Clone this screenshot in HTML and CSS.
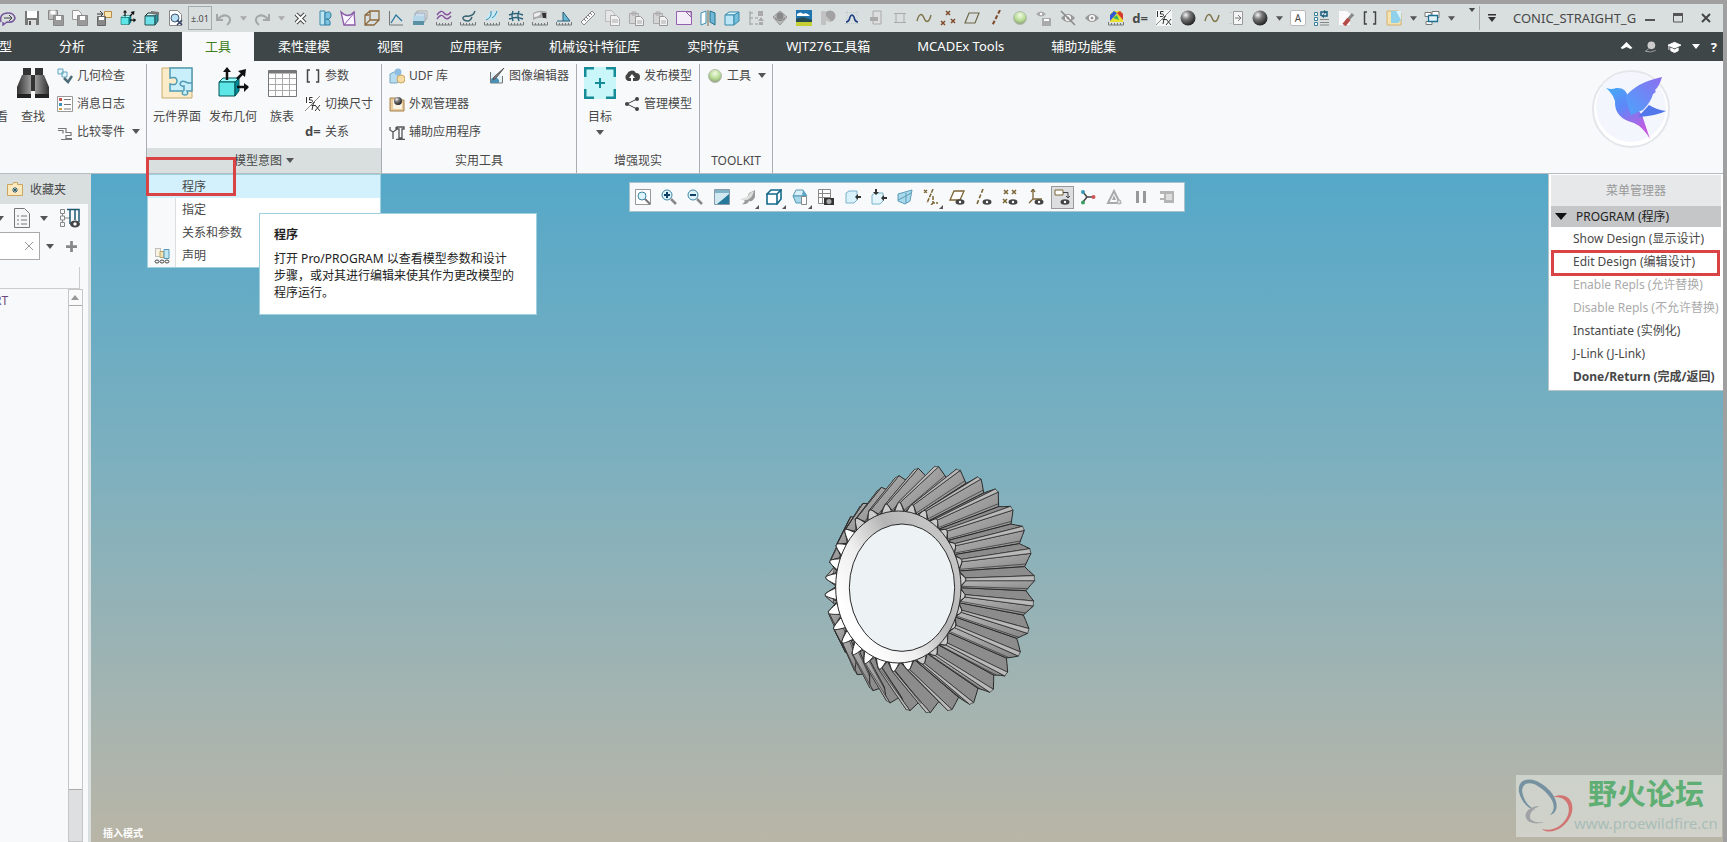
FILE: index.html
```
<!DOCTYPE html>
<html lang="zh-CN">
<head>
    <meta charset="UTF-8">
    <meta name="viewport" content="width=device-width, initial-scale=1.0">
    <title>CONIC_STRAIGHT_GEAR</title>
    <link rel="stylesheet" href="styles.css">
</head>
<body>

    <!-- SHARED ICONS -->
    <svg class="defs" width="0" height="0" aria-hidden="true">
        <defs>
            <radialGradient id="dark-ball" cx="0.35" cy="0.3" r="0.75"><stop offset="0" stop-color="#f4f4f4"/><stop offset="0.4" stop-color="#777"/><stop offset="1" stop-color="#1c1c1c"/></radialGradient>
            <radialGradient id="green-ball" cx="0.5" cy="0.3" r="0.7"><stop offset="0" stop-color="#f2fae6"/><stop offset="0.6" stop-color="#b4da90"/><stop offset="1" stop-color="#8a9a80"/></radialGradient>
            <linearGradient id="steel" x1="0" x2="1"><stop offset="0" stop-color="#333"/><stop offset="0.5" stop-color="#aaa"/><stop offset="1" stop-color="#333"/></linearGradient>
            <linearGradient id="bird" x1="0" y1="0" x2="0.6" y2="1"><stop offset="0" stop-color="#3fb4f5"/><stop offset="0.5" stop-color="#5e87f8"/><stop offset="1" stop-color="#c45be0"/></linearGradient>
            <linearGradient id="wing" x1="0" y1="1" x2="1" y2="0"><stop offset="0" stop-color="#4aa5fb"/><stop offset="1" stop-color="#8d6ef0"/></linearGradient>
            <linearGradient id="ring" x1="0.1" y1="0.7" x2="0.8" y2="0.2"><stop offset="0" stop-color="#fff"/><stop offset="0.35" stop-color="#eee"/><stop offset="0.7" stop-color="#b4b4b4"/><stop offset="1" stop-color="#c4c4c4"/></linearGradient>
            <linearGradient id="flank" x1="0" y1="0" x2="1" y2="1"><stop offset="0" stop-color="#b6b6b6"/><stop offset="1" stop-color="#868686"/></linearGradient>
        </defs>
        <symbol id="i-ball" viewBox="0 0 16 16"><circle cx="8" cy="8" r="7.5" fill="url(#dark-ball)"/></symbol>
        <symbol id="i-green" viewBox="0 0 16 16"><circle cx="8" cy="8" r="6.5" fill="url(#green-ball)" stroke="#b4bdae"/></symbol>
        <symbol id="i-wave" viewBox="0 0 16 16"><path d="M1 11C3 3 6 3 8 8s5 5 7-3" fill="none" stroke="#7d7348" stroke-width="1.4"/></symbol>
        <symbol id="i-ruler" viewBox="0 0 16 16"><path d="M.5 12v3h15v-3M3.500 15v-2M6.500 15v-2M9.500 15v-2M12.500 15v-2" fill="none" stroke="#777"/></symbol>
        <symbol id="i-eye" viewBox="0 0 16 16"><path d="M1 8q7-8 14 0q-7 8-14 0z" fill="currentColor"/><circle cx="8" cy="8" r="3" fill="#fff"/><circle cx="8" cy="8" r="1.500" fill="currentColor"/></symbol>
        <symbol id="i-paste" viewBox="0 0 16 16"><path d="M1.500 3.500h9v10h-9zM4 2h4v3H4z" fill="#d5d5d5" stroke="#aaa"/><path d="M7.500 6.500h5l3 3v6h-8z" fill="#f2f2f2" stroke="#999"/><path d="M9 11h5M9 13h5" stroke="#aaa"/></symbol>
        <symbol id="i-fx" viewBox="0 0 16 16"><path d="M0 0h16v16H0z" fill="#fff" opacity="0.700"/><path d="M15 0L0 15" stroke="#888"/><path d="M1.500 1v6M7.500 1.500h-3V4h2q1 0 1 1.500T4 6.500M10 6q-2 0-2 3l-1 5M6.500 9.500H10M10 9l5 6M15 9l-5 6" fill="none" stroke="#333"/></symbol>
        <symbol id="i-publish" viewBox="0 0 32 32"><path d="M2 15l4-4h16l-4 4z" fill="#9ff" stroke="#055"/><path d="M2 15h16v14H2z" fill="#5ee6e6" stroke="#055"/><path d="M18 15l4-4v13l-4 5z" fill="#089" stroke="#055"/><path d="M10 13V3M20 12l7-7M20 20h11" stroke="#111" stroke-width="2.500"/><path d="M6 5l4-5 4 5zM21 4l8-2-1 8zM27 16l5 4-5 5z" fill="#111"/></symbol>
        <symbol id="i-caret" viewBox="0 0 8 5"><path d="M0 0h8L4 5z" fill="currentColor"/></symbol>
    </svg>

    <!-- QUICK ACCESS BAR -->
    <header class="quick-bar">
        <div class="quick-tools">
            <button aria-label="会话"><svg viewBox="0 0 16 16"><path d="M1 12q-2-9 7-9 6 0 7 5-1 5-8 4l-4 3v-3" fill="none" stroke="#75579c" stroke-width="1.500"/><path d="M4 8h8m-3-3l3 3-3 3" fill="none" stroke="#444"/></svg></button>
            <button aria-label="保存"><svg viewBox="0 0 16 16"><path d="M1 1h14v14H1z" fill="#777"/><path d="M3 1h10v7H3z" fill="#fff"/><path d="M4 10h8v5H4z" fill="#ddd"/><path d="M5 11h2v4H5z" fill="#555"/></svg></button>
            <button aria-label="保存副本"><svg viewBox="0 0 16 16"><path d="M.5.5h9v9h-9z" fill="#bbb" stroke="#888"/><path d="M2.500.5h5v4h-5z" fill="#fff"/><path d="M5.500 5.500h10v10h-10z" fill="#999" stroke="#888"/><path d="M8 6h5v4H8z" fill="#fff"/></svg></button>
            <button aria-label="另存"><svg viewBox="0 0 16 16"><path d="M.5.5h6l3 3v6h-9z" fill="#fafafa" stroke="#999"/><path d="M5.500 5.500h10v10h-10z" fill="#999" stroke="#888"/><path d="M8 6h5v4H8z" fill="#fff"/></svg></button>
            <button aria-label="保存备份"><svg viewBox="0 0 16 16"><path d="M8.500 1.500h7v6h-7z" fill="#fbe6b0" stroke="#b98d48"/><path d="M1 4h6M4 1l3 3-3 3" fill="none" stroke="#333"/><path d="M1.500 6.500h8v9h-8z" fill="#888" stroke="#666"/><path d="M3 7h5v3H3z" fill="#fff"/></svg></button>
            <button aria-label="发布几何"><svg><use href="#i-publish"/></svg></button>
            <button aria-label="收缩包络"><svg viewBox="0 0 16 16"><path d="M1 6l3-3h10l-3 3z" fill="#cff" stroke="#222"/><path d="M1 6h10v9H1z" fill="#6ee0ea" stroke="#255"/><path d="M11 6l3-3v8l-3 4z" fill="#2a98a5" stroke="#255"/><path d="M7 1l8 1v3l-8-1z" fill="#777"/></svg></button>
            <button aria-label="查看文件"><svg viewBox="0 0 16 16"><path d="M1.500.5h8l4 4v11h-12z" fill="#fff" stroke="#888"/><circle cx="7" cy="8" r="4" fill="#b9e0f3" stroke="#457"/><path d="M9 10l5 5M14 10l-5 5" stroke="#346" stroke-width="1.500"/></svg></button>
            <button class="boxed" aria-label="公差">±.01</button>
            <button aria-label="撤销"><svg viewBox="0 0 16 16"><path d="M1 4v6h6M2 9q6-6 11-2 3 4-2 8" fill="none" stroke="#a3a7a8" stroke-width="2"/></svg></button>
            <button class="arrow" aria-label="撤销列表"><svg class="off"><use href="#i-caret"/></svg></button>
            <button aria-label="重做"><svg viewBox="0 0 16 16"><path d="M15 4v6H9M14 9q-6-6-11-2-3 4 2 8" fill="none" stroke="#a3a7a8" stroke-width="2"/></svg></button>
            <button class="arrow" aria-label="重做列表"><svg class="off"><use href="#i-caret"/></svg></button>
            <button aria-label="关闭文件"><svg viewBox="0 0 16 16"><path d="M4 4l9 9M13 4l-9 9" stroke="#444" stroke-width="4"/><path d="M4 4l9 9M13 4l-9 9" stroke="#fff" stroke-width="2"/></svg></button>
            <button aria-label="旋转特征"><svg viewBox="0 0 16 16"><path d="M4 1h5v14H4z" fill="#bfe5f3" stroke="#3689ac"/><path d="M9 3q6-3 6 2t-5 4q5 0 4 6H9z" fill="#7cc4e0" stroke="#2e7da0"/></svg></button>
            <button aria-label="曲面"><svg viewBox="0 0 16 16"><path d="M1 2q7 7 13 0l1 13H4z" fill="#faf5ff" stroke="#8a5aa8" stroke-width="1.300"/><path d="M4 15L15 2" stroke="#8a5aa8"/></svg></button>
            <button aria-label="边界"><svg viewBox="0 0 16 16"><path d="M6 1h9v9H6zM6 1L1 5v10h9l5-5M1 15l5-5M1 5h4" fill="none" stroke="#8c6a3d" stroke-width="1.300"/></svg></button>
            <button aria-label="坐标"><svg viewBox="0 0 16 16"><path d="M1.500 1v14H15" fill="none" stroke="#777"/><path d="M3 13l5-8 6 6" fill="none" stroke="#28789c" stroke-width="1.300"/></svg></button>
            <button aria-label="图像"><svg viewBox="0 0 16 16"><path d="M5 1h10v8H5z" fill="#e5e5e5" stroke="#aaa"/><path d="M3 3h10v9H3z" fill="#cde" stroke="#9ab"/><path d="M1 6h11v9H1z" fill="#b5d7e8"/><path d="M1 11h11v4H1z" fill="#5c91a5"/></svg></button>
            <button aria-label="曲率分析"><svg viewBox="0 0 16 16"><path d="M1 5q4-6 7-2t7-1M1 9q4-6 7-2t7-1" fill="none" stroke="#85539d" stroke-width="1.400"/><use href="#i-ruler"/></svg></button>
            <button aria-label="偏移分析"><svg viewBox="0 0 16 16"><path d="M15 1q-2 6-9 5-5 1-2 4 6 3 8-3" fill="none" stroke="#3c6672" stroke-width="1.500"/><use href="#i-ruler"/></svg></button>
            <button aria-label="着色分析"><svg viewBox="0 0 16 16"><path d="M1 9L6 2l9-1-4 9z" fill="#c6e9f5"/><path d="M2 10Q8 8 7 1M8 8q4-2 5-7" fill="none" stroke="#3289a9"/><use href="#i-ruler"/></svg></button>
            <button aria-label="网格曲面"><svg viewBox="0 0 16 16"><path d="M1 5q7-3 14 0M1 9q7-3 14 0M5 1q-2 5 0 10M11 1q-2 5 0 10" fill="none" stroke="#28607a" stroke-width="1.400"/><use href="#i-ruler"/></svg></button>
            <button aria-label="反射分析"><svg viewBox="0 0 16 16"><path d="M1 3q7-4 14-1v7q-7-3-14 1z" fill="#aaa"/><path d="M2 4q5-3 7-1-2 4-7 4z" fill="#eee"/><path d="M10 3h4v5h-3z" fill="#333"/><use href="#i-ruler"/></svg></button>
            <button aria-label="拔模分析"><svg viewBox="0 0 16 16"><path d="M7 2v9h7z" fill="#6db8d4" stroke="#28607a"/><path d="M1 11h6" stroke="#28607a"/><use href="#i-ruler"/></svg></button>
            <button aria-label="测量"><svg viewBox="0 0 16 16"><path d="M1 12L12 1l3 3L4 15z" fill="#fafafa" stroke="#888"/><path d="M4 9l2 2M6 7l2 2M8 5l2 2M10 3l2 2" stroke="#777"/></svg></button>
            <button aria-label="复制"><svg viewBox="0 0 16 16"><path d="M1.500.5h6l3 3v8h-9z" fill="#e5e5e5" stroke="#bbb"/><path d="M6.500 5.500h6l3 3v7h-9z" fill="#f1f1f1" stroke="#aaa"/><path d="M8 10h6M8 12h6" stroke="#aaa"/></svg></button>
            <button aria-label="粘贴"><svg><use href="#i-paste"/></svg></button>
            <button aria-label="选择性粘贴"><svg><use href="#i-paste"/></svg></button>
            <button aria-label="草绘"><svg viewBox="0 0 16 16"><path d="M.5 1.500h15v13H.5z" fill="#f3edf7" stroke="#9461ad"/><path d="M10 2l5 5V2z" fill="#fff" stroke="#9461ad"/></svg></button>
            <button aria-label="对称"><svg viewBox="0 0 16 16"><path d="M1 3l5-2v12l-5 2z" fill="#fff" stroke="#3a91b4"/><path d="M10 1l5 2v12l-5-3z" fill="#6fb9d6" stroke="#23708f"/><path d="M8 0v16" stroke="#7a6a4a"/></svg></button>
            <button aria-label="拉伸"><svg viewBox="0 0 16 16"><path d="M1 5l4-3h10l-4 3z" fill="#e0f6fd" stroke="#3689ac"/><path d="M1 5h9v10H1z" fill="#bce6f5" stroke="#3689ac"/><path d="M10 5l5-3v9l-5 4z" fill="#75bfdc" stroke="#3689ac"/></svg></button>
            <button aria-label="模型树"><svg viewBox="0 0 16 16"><path d="M2 1v14M2 3h3M2 8h3M2 14h3M7 8h3M7 14h3" stroke="#999"/><path d="M10 1h5v5h-5zM13 7l3 4h-6zM11 12h4v3h-4z" fill="#aaa"/></svg></button>
            <button aria-label="阵列"><svg viewBox="0 0 16 16"><path d="M8 1l7 6-7 8-7-8z" fill="#bbb" stroke="#999"/><circle cx="8" cy="6" r="3.500" fill="#888"/><path d="M3 8q5 5 10 0" fill="none" stroke="#777"/></svg></button>
            <button aria-label="场景"><svg viewBox="0 0 16 16"><path d="M0 0h16v16H0z" fill="#1f75ad"/><path d="M1 4q4-3 6 0 4-2 7 2H1z" fill="#fff"/><path d="M0 9l7-2 9 3v2H0z" fill="#244b52"/><path d="M0 12h16v4H0z" fill="#c5ce35"/></svg></button>
            <button aria-label="渲染"><svg viewBox="0 0 16 16"><circle cx="10" cy="6" r="5.500" fill="#a2a2a2"/><path d="M1 1h5v5l5 5-2 1-3-2v5H1z" fill="#c2c2c2"/></svg></button>
            <button aria-label="曲线"><svg viewBox="0 0 16 16"><path d="M1 2.500h14M1 13.500h14M3 1v14M13 1v14" stroke="#bcc9cf" stroke-dasharray="1 1"/><path d="M2 12q3 0 4-5 2-4 4 0 1 5 4 5" fill="none" stroke="#1d3e80" stroke-width="1.600"/></svg></button>
            <button aria-label="移动"><svg viewBox="0 0 16 16"><path d="M5 1h8v13H5z" fill="#ddd" stroke="#aaa"/><path d="M2 7h8v4H2z" fill="#aaa"/></svg></button>
            <button aria-label="矩形"><svg viewBox="0 0 16 16"><path d="M4 3.500h8v9H4zM2 3.500h2M12 3.500h2M2 12.500h2M12 12.500h2" fill="none" stroke="#aaa"/></svg></button>
            <button aria-label="样条"><svg><use href="#i-wave"/></svg></button>
            <button aria-label="基准点"><svg viewBox="0 0 16 16"><path d="M6 1l4 4m0-4L6 5M1 11l4 4m0-4l-4 4M11 9l4 4m0-4l-4 4" stroke="#7e4b2b" stroke-width="1.500"/></svg></button>
            <button aria-label="基准平面"><svg viewBox="0 0 16 16"><path d="M5 3h10l-4 10H1z" fill="none" stroke="#6d6848" stroke-width="1.200"/></svg></button>
            <button aria-label="基准轴"><svg viewBox="0 0 16 16"><path d="M12 0L4 16" stroke="#7e4b2b" stroke-width="2" stroke-dasharray="4 2"/></svg></button>
            <button aria-label="运行"><svg><use href="#i-green"/></svg></button>
            <button aria-label="保存可见性"><svg viewBox="0 0 16 16"><path d="M0 4q5-5 10 0-5 5-10 0zM6 8h9v8H6z" fill="#aaa"/><path d="M8 9h5v2H8zM4 3h2v2H4z" fill="#fff"/></svg></button>
            <button class="gray" aria-label="隐藏"><svg><use href="#i-eye"/><path d="M1 1l14 14" stroke="#888" stroke-width="1.500"/></svg></button>
            <button class="gray" aria-label="显示"><svg><use href="#i-eye"/></svg></button>
            <button aria-label="色谱"><svg viewBox="0 0 16 16"><path d="M2 12V4l4-3h6l3 3v8z" fill="#e9df32"/><path d="M2 11V5l4-4 3 2z" fill="#3057d7"/><path d="M9 3l3-2 3 3v6z" fill="#d63a32"/><path d="M5 8l4-3 2 5z" fill="#35b960"/><use href="#i-ruler"/></svg></button>
            <button class="glyph" aria-label="关系">d=</button>
            <button aria-label="切换尺寸"><svg><use href="#i-fx"/></svg></button>
            <button aria-label="外观"><svg><use href="#i-ball"/></svg></button>
            <button aria-label="曲线外观"><svg><use href="#i-wave"/></svg></button>
            <button aria-label="导出"><svg viewBox="0 0 16 16"><path d="M5.500 1.500h9v13h-9z" fill="#f5f5f5" stroke="#999"/><path d="M1 2.500h3M1 13.500h3" stroke="#ccc"/><path d="M7 8h5M10 5l3 3-3 3" fill="none" stroke="#777"/></svg></button>
            <button aria-label="外观库"><svg><use href="#i-ball"/></svg></button>
            <button class="arrow" aria-label="外观列表"><svg><use href="#i-caret"/></svg></button>
            <button class="glyph letter" aria-label="注解">A</button>
            <button aria-label="再生"><svg viewBox="0 0 16 16"><path d="M.5 2.500h3v3h-3zM.5 7.500h3v3h-3zM.5 12.500h3v3h-3z" fill="#fff" stroke="#37809c"/><path d="M6 9.500h9M6 12.500h9M6 15h9" stroke="#888"/><path d="M7 6V2h3M13 1v5h-3" fill="none" stroke="#175e7c" stroke-width="1.500"/><path d="M10 0l3 2-3 2zM10 4v4L7 6z" fill="#175e7c"/></svg></button>
            <button aria-label="擦除"><svg viewBox="0 0 16 16"><path d="M1 1h8l3 3v11H1z" fill="#fafafa"/><path d="M8 12l7-8" stroke="#888" stroke-width="3"/><path d="M6 15l5-6" stroke="#b54c45" stroke-width="4"/></svg></button>
            <button aria-label="参数"><svg viewBox="0 0 16 16"><path d="M5 2H2.500v12H5M11 2h2.500v12H11" fill="none" stroke="#444" stroke-width="1.500"/></svg></button>
            <button aria-label="打开"><svg viewBox="0 0 16 16"><path d="M1 1h11l3 2v12H1z" fill="#f6e2ab" stroke="#d2b273"/><path d="M5 1h10v9l-3 3H5z" fill="#8fd0ea"/><path d="M10 1h5v9z" fill="#d8f2fb"/></svg></button>
            <button class="arrow" aria-label="打开列表"><svg><use href="#i-caret"/></svg></button>
            <button aria-label="窗口"><svg viewBox="0 0 16 16"><path d="M8 1.500h7v6H8zM1 2.500h6v4H1zM2 11.500h6v3H2z" fill="#fff" stroke="#777"/><path d="M4.500 5.500h9v6h-9z" fill="#dff2fa" stroke="#1f6f93" stroke-width="1.300"/></svg></button>
            <button class="arrow" aria-label="窗口列表"><svg><use href="#i-caret"/></svg></button>
        </div>
        <button class="overflow" aria-label="更多命令"><svg><use href="#i-caret"/></svg></button>
        <button class="customize" aria-label="自定义"><svg viewBox="0 0 10 8"><path d="M1 0h8v1.500H1zM1 3h8L5 8z" fill="#333"/></svg></button>
        <span class="doc-title">CONIC_STRAIGHT_G</span>
        <div class="window-buttons">
            <button aria-label="最小化"><svg viewBox="0 0 10 10"><path d="M0 6h10v2H0z" fill="#555"/></svg></button>
            <button aria-label="最大化"><svg viewBox="0 0 10 10"><path d="M.5 1v8h9V1z" fill="none" stroke="#555"/><path d="M0 0h10v3H0z" fill="#555"/></svg></button>
            <button aria-label="关闭"><svg viewBox="0 0 10 10"><path d="M1 1l8 8M9 1L1 9" stroke="#444" stroke-width="2"/></svg></button>
        </div>
    </header>

    <!-- RIBBON TABS -->
    <nav class="tabs">
        <a href="#model">型</a>
        <a href="#analysis">分析</a>
        <a href="#annotate">注释</a>
        <a href="#tools" class="active">工具</a>
        <a href="#flexible">柔性建模</a>
        <a href="#view">视图</a>
        <a href="#apps">应用程序</a>
        <a href="#features">机械设计特征库</a>
        <a href="#simulation">实时仿真</a>
        <a href="#wjt">WJT276工具箱</a>
        <a href="#mcadex">MCADEx Tools</a>
        <a href="#aux">辅助功能集</a>
        <div class="tab-tools">
            <button aria-label="折叠功能区"><svg viewBox="0 0 12 12"><path d="M0 7l6-6 6 6-2 1-4-2-4 2z" fill="#fff"/></svg></button>
            <button aria-label="搜索"><svg viewBox="0 0 14 14"><circle cx="8" cy="5" r="4.500" fill="#ccc"/><path d="M5 9l-4 3q6 2 12-1" fill="none" stroke="#aaa"/></svg></button>
            <button aria-label="学习"><svg viewBox="0 0 14 12"><path d="M0 4l7-3 7 3-7 3zM3 7l4 2 4-2v3l-4 2-4-2zM1 4v5" fill="#fff" stroke="#fff"/></svg></button>
            <button aria-label="学习列表" class="small"><svg><use href="#i-caret"/></svg></button>
            <button aria-label="帮助">?</button>
        </div>
    </nav>

    <!-- RIBBON -->
    <section class="ribbon" id="tools">
        <div class="group investigate">
            <div class="tools">
                <button class="big cut">看</button>
                <button class="big"><svg viewBox="0 0 32 32"><path d="M6 1h8v8H6zM18 1h8v8h-8zM13 8h6v16h-6z" fill="#333"/><path d="M5 8h9v22H0V20zM18 8h9l5 12v10H18z" fill="url(#steel)"/><path d="M0 27h14v4H0zM18 27h14v4H18z" fill="#222"/></svg>查找</button>
                <div class="stack">
                    <button><svg viewBox="0 0 16 16"><path d="M1 1h5v5H1zM5 4h5v5H5z" fill="#e7f6fd" stroke="#61a4c2"/><path d="M7 10l4 4 4-6" fill="none" stroke="#4d6c7a" stroke-width="2.500"/></svg>几何检查</button>
                    <button><svg viewBox="0 0 16 16"><path d="M.5.5h15v15H.5z" fill="#fff" stroke="#999"/><path d="M2 2h3v3H2z" fill="#c75450"/><path d="M2 7h3v3H2z" fill="#3a93be"/><path d="M2 12h3v2H2z" fill="#d2a13d"/><path d="M7 3.500h7M7 8.500h7M7 13h7" stroke="#777"/></svg>消息日志</button>
                    <button><svg viewBox="0 0 16 16"><path d="M1 4.500h8v4h5v3H9v3h6M4 15.500h11M1 6.500h5v3" fill="none" stroke="#777" stroke-width="1.200"/></svg>比较零件<svg class="caret"><use href="#i-caret"/></svg></button>
                </div>
            </div>
        </div>
        <div class="group intent">
            <div class="tools">
                <button class="big"><svg viewBox="0 0 32 32"><path d="M1 1h30v30H1z" fill="#fbebc8" stroke="#c9aa6c"/><path d="M9 1h22v23h-5q2 4-2 4t-2-4H9v-7q7 2 7-3t-7-3z" fill="#c9effa" stroke="#4f9cb4" stroke-width="1.500"/><path d="M31 16h-4q-7-4-8 1 1 3 4 2v5" fill="none" stroke="#4f9cb4" stroke-width="1.500"/></svg>元件界面</button>
                <button class="big"><svg><use href="#i-publish"/></svg>发布几何</button>
                <button class="big narrow"><svg viewBox="0 0 32 32"><path d="M2.500 3.500h28v26h-28z" fill="#fff" stroke="#777"/><path d="M3 5h27" stroke="#777" stroke-width="3"/><path d="M3 11.500h27M3 17.500h27M3 23.500h27M9.500 6v23M16.500 6v23M23.500 6v23" stroke="#aaa"/></svg>族表</button>
                <div class="stack">
                    <button><svg viewBox="0 0 16 16"><path d="M5 2H2.500v12H5M11 2h2.500v12H11" fill="none" stroke="#444" stroke-width="1.500"/></svg>参数</button>
                    <button><svg><use href="#i-fx"/></svg>切换尺寸</button>
                    <button><b>d=</b>关系</button>
                </div>
            </div>
            <button class="group-title open">模型意图<svg class="caret"><use href="#i-caret"/></svg></button>

            <div class="menu" role="menu">
                <button role="menuitem" class="selected">程序</button>
                <button role="menuitem">指定</button>
                <button role="menuitem">关系和参数</button>
                <button role="menuitem"><svg viewBox="0 0 16 16"><path d="M1.500.5h5v8h-5z" fill="#f7f1df" stroke="#888" stroke-dasharray="1 1"/><path d="M6 3.500h4v6H6z" fill="#f3e3b4" stroke="#b9a467"/><path d="M10 1.500h5v9h-5z" fill="#bfe6f5" stroke="#5499b5"/><ellipse cx="3" cy="13.500" rx="2" ry="1.500" fill="none" stroke="#444"/><ellipse cx="8" cy="13.500" rx="2" ry="1.500" fill="none" stroke="#444"/><ellipse cx="13" cy="13.500" rx="2" ry="1.500" fill="none" stroke="#444"/></svg>声明</button>
            </div>
            <div class="callout"></div>
            <div class="tooltip" role="tooltip">
                <h2>程序</h2>
                <p>打开 Pro/PROGRAM 以查看模型参数和设计步骤，或对其进行编辑来使其作为更改模型的程序运行。</p>
            </div>
        </div>
        <div class="group utilities">
            <div class="tools">
                <div class="stack">
                    <button><svg viewBox="0 0 16 16"><path d="M1 6l4-2h6v8l-3 3H1z" fill="#b7dcef" stroke="#77a7c0"/><circle cx="9" cy="4" r="3.500" fill="#8fbde2"/><circle cx="12" cy="11" r="4" fill="#f5dda5" stroke="#c9a55f"/></svg>UDF 库</button>
                    <button><svg viewBox="0 0 16 16"><path d="M1 2h6l1 2h7v11H1z" fill="#e8ca9c" stroke="#a5824d"/><path d="M4 4h9v9H4z" fill="#f9f3e5"/><circle cx="9" cy="5" r="4" fill="url(#dark-ball)"/></svg>外观管理器</button>
                    <button><svg viewBox="0 0 16 16"><path d="M1 3v3l3 2v7M7 3v3L4 8M8 3h7v2h-2v9h-3V5H8zM7 15.500h9" fill="none" stroke="#555" stroke-width="1.300"/></svg>辅助应用程序</button>
                </div>
                <div class="stack">
                    <button><svg viewBox="0 0 16 16"><path d="M1.500 4v11h12V8" fill="#e4f2f8" stroke="#777"/><path d="M2 11l4-3 4 4v3H2z" fill="#4a91b5"/><path d="M15 0L7 10l-3 2 1-3z" fill="#888" stroke="#555"/></svg>图像编辑器</button>
                </div>
            </div>
            <div class="group-title">实用工具</div>
        </div>
        <div class="group ar">
            <div class="tools">
                <button class="big narrow"><svg viewBox="0 0 32 32"><path d="M0 0h32v32H0z" fill="#c9f7f9"/><path d="M1 10V1h9M22 1h9v9M31 22v9h-9M10 31H1v-9" fill="none" stroke="#168c98" stroke-width="3"/><path d="M16 11v10M11 16h10" stroke="#168c98" stroke-width="2"/></svg>目标<svg class="caret"><use href="#i-caret"/></svg></button>
                <div class="stack">
                    <button><svg viewBox="0 0 16 16"><path d="M4 13a4 4 0 0 1-1-7 5 5 0 0 1 9-1 4 4 0 0 1 0 8z" fill="#444"/><path d="M8 6l3 4H9v4H7v-4H5z" fill="#fff"/></svg>发布模型</button>
                    <button><svg viewBox="0 0 16 16"><path d="M13 3L3 8l10 5" fill="none" stroke="#444"/><circle cx="13" cy="3" r="2" fill="#444"/><circle cx="3" cy="8" r="2" fill="#444"/><circle cx="13" cy="13" r="2" fill="#444"/></svg>管理模型</button>
                </div>
            </div>
            <div class="group-title">增强现实</div>
        </div>
        <div class="group toolkit">
            <div class="tools">
                <div class="stack">
                    <button><svg><use href="#i-green"/></svg>工具<svg class="caret"><use href="#i-caret"/></svg></button>
                </div>
            </div>
            <div class="group-title">TOOLKIT</div>
        </div>
        <button class="bird" aria-label="助手"><svg viewBox="0 0 80 80"><circle cx="40" cy="40" r="38" fill="#fff" stroke="#e4e6ea" stroke-width="2"/><circle cx="40" cy="38" r="35" fill="#edf0fb" opacity="0.600"/><path d="M9 16q10 6 16 3 10-1 12 9l14 18 8 24Q52 58 43 54 23 49 24 32 20 20 9 16z" fill="url(#bird)"/><path d="M34 28Q46 13 71 8 68 18 64 21q2 2-2 4-2 8-10 16L40 46z" fill="url(#wing)"/><path d="M58 36q8 5 17 6-10 5-28 6z" fill="#5277ea"/></svg></button>
    </section>

    <!-- WORKSPACE -->
    <div class="workspace">
        <aside class="navigator">
            <div class="nav-tab"><svg viewBox="0 0 16 16"><path d="M.5 3.500h5l1-2h4v2h5v11H.5z" fill="#fbe9bd" stroke="#c9a55f"/><path d="M8 6v6M5 9h6M6 7l4 4M10 7l-4 4" stroke="#2c5d77"/></svg>收藏夹</div>
            <div class="nav-tools">
                <svg class="caret"><use href="#i-caret"/></svg>
                <button aria-label="显示设置"><svg viewBox="0 0 16 20"><path d="M.5.5h10l5 5v14H.5z" fill="#f4f7f8" stroke="#777"/><path d="M3 8h2M3 12h2M3 16h2M7 8h6M7 12h6M7 16h6" stroke="#777"/></svg></button>
                <svg class="caret"><use href="#i-caret"/></svg>
                <button class="tree" aria-label="树列"><svg viewBox="0 0 20 20"><path d="M.5 1.500h4v4h-4zM.5 8h4v4h-4zM.5 14.500h4v4h-4zM5 10h5M2.500 5v3M2.500 12v3" fill="none" stroke="#888"/><path d="M7 1.500h12V14M10 2v14M15 2v10" fill="none" stroke="#1d5870" stroke-width="1.500"/><ellipse cx="15" cy="16" rx="5" ry="3.500" fill="#444"/><circle cx="15" cy="16" r="1.700" fill="#fff"/></svg></button>
            </div>
            <div class="nav-filter">
                <input type="text" aria-label="筛选">
                <button class="clear" aria-label="清除"><svg viewBox="0 0 10 10"><path d="M1 1l8 8M9 1L1 9" stroke="#999"/></svg></button>
                <svg class="caret"><use href="#i-caret"/></svg>
                <button class="add" aria-label="添加"><svg viewBox="0 0 12 12"><path d="M6 0v12M0 6h12" stroke="#888" stroke-width="3"/></svg></button>
            </div>
            <div class="nav-header"></div>
            <div class="nav-tree">
                <span class="part">RT</span>
                <div class="scrollbar">
                    <button aria-label="向上滚动"><svg viewBox="0 0 8 5"><path d="M4 0l4 5H0z" fill="#999"/></svg></button>
                    <div class="thumb"></div>
                </div>
            </div>
        </aside>

        <main class="viewport">
            <div class="view-tools">
                <button aria-label="重新调整"><svg viewBox="0 0 16 16"><path d="M.5.5h15v15H.5z" fill="#fff" stroke="#999"/><circle cx="7" cy="7" r="4" fill="#dff3fb" stroke="#3c86a8"/><path d="M10 10l5 5" stroke="#777" stroke-width="2"/></svg></button>
                <button aria-label="放大"><svg viewBox="0 0 16 16"><circle cx="6" cy="6" r="5" fill="#dff3fb" stroke="#3c86a8"/><path d="M6 3v6M3 6h6" stroke="#123f66" stroke-width="2"/><path d="M10 10l5 5" stroke="#888" stroke-width="2.500"/></svg></button>
                <button aria-label="缩小"><svg viewBox="0 0 16 16"><circle cx="6" cy="6" r="5" fill="#dff3fb" stroke="#3c86a8"/><path d="M3 6h6" stroke="#123f66" stroke-width="2"/><path d="M10 10l5 5" stroke="#888" stroke-width="2.500"/></svg></button>
                <button aria-label="重画"><svg viewBox="0 0 16 16"><path d="M.5.5h15v15H.5z" fill="#d3e9f1" stroke="#89a"/><path d="M1 1h14v3H1z" fill="#7fb3c6"/><path d="M15 5v10H3l5-4z" fill="#26799b"/></svg></button>
                <button class="more" aria-label="渲染选项"><svg viewBox="0 0 16 16"><path d="M0 10q3 2 7-1l2-5 6-3v7q-2 5-6 4-2 4-7 3 4-2 2-4z" fill="#999"/><path d="M2 9q5 1 8-5l4-2q-1 5-5 8-3 2-7 1z" fill="#ddd"/></svg></button>
                <button class="more" aria-label="显示样式"><svg viewBox="0 0 16 16"><path d="M1 5l4-4h10l-4 4zM1 5h10v10H1zM11 5l4-4v9l-4 5z" fill="#fff" stroke="#16698c" stroke-width="1.600"/></svg></button>
                <button class="more" aria-label="已保存方向"><svg viewBox="0 0 16 16"><path d="M4 1h7l4 6H1z" fill="#d9f0f9" stroke="#5597b4"/><path d="M11 1l4 6h-5z" fill="#58a5c6"/><path d="M1 7h9v7H4z" fill="#a6d7eb" stroke="#5597b4"/><path d="M9.500 7.500h5v8h-5z" fill="#fff" stroke="#888"/></svg></button>
                <button aria-label="视图管理器"><svg viewBox="0 0 16 16"><path d="M.5.5h12v14H.5zM1 4.500h11M1 8.500h11M4.500 1v14" fill="#fff" stroke="#888"/><path d="M6 9h10v7H6z" fill="#333"/><circle cx="11" cy="12.500" r="2.500" fill="#aaa"/></svg></button>
                <button aria-label="移入"><svg viewBox="0 0 16 16"><path d="M1 4l3-2h8v9l-3 3H1z" fill="#d8f1fa" stroke="#79b3cb"/><path d="M12 8h4" stroke="#333" stroke-width="2"/><path d="M13 5v6l-3-3z" fill="#333"/></svg></button>
                <button aria-label="移出"><svg viewBox="0 0 16 16"><path d="M1 6l3-2h8v8l-3 3H1z" fill="#e4f5fb" stroke="#79b3cb"/><path d="M5 0v3M12 9h4" stroke="#333" stroke-width="2"/><path d="M2 3h6L5 6zM13 6v6l-3-3z" fill="#333"/></svg></button>
                <button aria-label="透视图"><svg viewBox="0 0 16 16"><path d="M1 5l14-4-2 11-5 3-7-3z" fill="#a8d8ec" stroke="#5c9cb8"/><path d="M9 4v10M1 11l8-4 5-3" fill="none" stroke="#5c9cb8"/></svg></button>
                <button class="more" aria-label="基准显示"><svg viewBox="0 0 16 16"><path d="M1 1l3 3m0-3L1 4M10 0L4 14M10 7v7h5M10 14l-2 2" fill="none" stroke="#7b6535" stroke-width="1.500" stroke-dasharray="4 1"/></svg></button>
                <button aria-label="平面显示"><svg viewBox="0 0 16 16"><path d="M5 2h10l-4 9H1z" fill="#fff" stroke="#7b6535" stroke-width="1.300"/><ellipse cx="11" cy="13" rx="4.500" ry="2.800" fill="#444"/><circle cx="11" cy="13" r="1.200" fill="#fff"/></svg></button>
                <button aria-label="轴显示"><svg viewBox="0 0 16 16"><path d="M7 0L1 15" stroke="#7b6535" stroke-width="1.600" stroke-dasharray="4 2"/><ellipse cx="11" cy="13" rx="4.500" ry="2.800" fill="#444"/><circle cx="11" cy="13" r="1.200" fill="#fff"/></svg></button>
                <button aria-label="点显示"><svg viewBox="0 0 16 16"><path d="M2 1l4 4m0-4L2 5M10 1l4 4m0-4l-4 4M1 10l4 4m0-4l-4 4" stroke="#7b6535" stroke-width="1.500"/><ellipse cx="11" cy="13" rx="4.500" ry="2.800" fill="#444"/><circle cx="11" cy="13" r="1.200" fill="#fff"/></svg></button>
                <button aria-label="坐标系显示"><svg viewBox="0 0 16 16"><path d="M5 1v9h9M5 10l-4 4M3 3l2-3 2 3" fill="none" stroke="#7b6535" stroke-width="1.300"/><ellipse cx="11" cy="13" rx="4.500" ry="2.800" fill="#444"/><circle cx="11" cy="13" r="1.200" fill="#fff"/></svg></button>
                <button class="pressed" aria-label="注释显示"><svg viewBox="0 0 16 16"><path d="M1 1h8v5H1z" fill="#fff" stroke="#7b6535"/><path d="M9 3.500h5V9M12 7l2 2 2-2" fill="none" stroke="#444"/><ellipse cx="11" cy="13" rx="4.500" ry="2.800" fill="#444"/><circle cx="11" cy="13" r="1.200" fill="#fff"/></svg></button>
                <button aria-label="旋转中心"><svg viewBox="0 0 16 16"><path d="M3 3l4 5h6M7 8l-4 5" fill="none" stroke="#444" stroke-width="1.500"/><circle cx="3" cy="3" r="2" fill="#3c9ab0"/><circle cx="13.500" cy="8" r="2" fill="#d05555"/><circle cx="3" cy="13.500" r="2" fill="#3a9e63"/></svg></button>
                <button aria-label="警告"><svg viewBox="0 0 16 16"><path d="M8 2l6 12H2z" fill="none" stroke="#aaa" stroke-width="2"/><path d="M8 6l2 5H6z" fill="#aaa"/><circle cx="13" cy="13" r="2" fill="#ddd" stroke="#aaa"/></svg></button>
                <button aria-label="暂停"><svg viewBox="0 0 16 16"><path d="M3 2h3v12H3zM10 2h3v12h-3z" fill="#999"/></svg></button>
                <button aria-label="停止"><svg viewBox="0 0 16 16"><path d="M1 2h14v12H5v-3H1V9h4V5H1z" fill="#b5b5b5"/><path d="M7 5h6v6H7z" fill="#ddd"/></svg></button>
            </div>

            <svg class="gear" id="gear" viewBox="0 0 720 840" role="img" aria-label="锥齿轮"></svg>

            <section class="menu-manager">
                <h2>菜单管理器</h2>
                <h3><svg viewBox="0 0 12 7"><path d="M0 0h12L6 7z" fill="#111"/></svg>PROGRAM (程序)</h3>
                <button>Show Design (显示设计)</button>
                <button class="marked">Edit Design (编辑设计)</button>
                <button disabled>Enable Repls (允许替换)</button>
                <button disabled>Disable Repls (不允许替换)</button>
                <button>Instantiate (实例化)</button>
                <button>J-Link (J-Link)</button>
                <button class="default">Done/Return (完成/返回)</button>
            </section>

            <p class="mode">插入模式</p>
            <div class="watermark">
                <svg viewBox="0 0 60 60"><g fill-rule="evenodd"><path d="M3 17C1 3 16 0 30 12 44 24 43 38 34 40 42 32 36 22 26 14 14 4 3 8 7 20c2 8 8 13 13 16C11 33 5 26 3 17z" fill="#7692a0"/><path d="M37 22c14-6 23 5 18 18C50 53 34 61 26 54c12 3 22-4 26-14 3-10-2-19-15-18z" fill="#d27472"/><path d="M24 31c-10 0-16 6-14 12 2 5 10 7 18 4-8 1-14-1-14-5 0-6 5-9 10-11z" fill="#a0a3a5"/></g></svg>
                <div>
                    <strong>野火论坛</strong>
                    <span>www.proewildfire.cn</span>
                </div>
            </div>
        </main>
    </div>

    <script src="gear.js"></script>
</body>
</html>
```

FILE: styles.css
```
:root {
    --bar: #d9dfdf;
    --dark: #3e4647;
    --ribbon: #f8f9fb;
    --text: #484848;
    --edge: #a0a0a0;
    --mark: #d94343;
    --font: "Noto Sans", "Noto Sans CJK SC", sans-serif;
}

* {
    box-sizing: border-box;
}

body {
    margin: 0;
    padding: 4px 4px 0 0;
    min-height: 100vh;
    display: flex;
    flex-direction: column;
    overflow: hidden;
    background: var(--edge);
    color: var(--text);
    font: 12px/17px var(--font);
}

button {
    margin: 0;
    padding: 0;
    border: 0;
    background: none;
    color: inherit;
    font: inherit;
    text-align: left;
    white-space: nowrap;
}

svg {
    display: block;
    flex: none;
    width: 16px;
    height: 16px;
}

.defs {
    position: absolute;
    width: 0;
    height: 0;
}

svg.caret {
    width: 8px;
    height: 5px;
    color: #555;
}

/* Quick access bar */
.quick-bar {
    display: flex;
    align-items: center;
    height: 28px;
    background: var(--bar);
}
.quick-tools {
    display: flex;
    align-items: center;
    flex: none;
    margin-left: -4px;
}
.quick-tools button {
    display: flex;
    align-items: center;
    justify-content: center;
    width: 24px;
    height: 24px;
}
.quick-tools .boxed {
    border: 1px solid #a5abab;
    font-size: 9px;
}
.quick-tools .arrow {
    width: 14px;
    color: #555;
}
.arrow svg {
    width: 7px;
    height: 5px;
}
svg.off {
    color: #aaa;
}
.quick-tools .gray {
    color: #999;
}
.quick-tools .glyph {
    font-size: 13px;
    font-weight: bold;
}
.quick-tools .letter {
    width: 16px;
    height: 16px;
    margin: 0 4px;
    border: 1px solid #bbb;
    border-radius: 2px;
    background: #fff;
    font-size: 10px;
    font-weight: normal;
}
.overflow {
    display: flex;
    align-items: flex-start;
    width: 22px;
    height: 24px;
    padding: 2px 0 0 10px;
    border-right: 1px solid #aaa;
}
.overflow svg {
    width: 8px;
    height: 4px;
}
.customize {
    padding: 0 16px 0 7px;
}
.customize svg {
    width: 10px;
    height: 8px;
}
.doc-title {
    white-space: nowrap;
    font-size: 13px;
}
.window-buttons {
    display: flex;
    gap: 18px;
    margin-left: auto;
    padding-right: 12px;
}
.window-buttons svg {
    width: 10px;
    height: 10px;
}

/* Tabs */
.tabs {
    display: flex;
    gap: 1px;
    height: 29px;
    padding-right: 6px;
    background: var(--dark);
    color: #fff;
    font-size: 13px;
    line-height: 28px;
}
.tabs a {
    padding: 0 23px;
    color: inherit;
    text-decoration: none;
    white-space: nowrap;
}
.tabs a:first-child {
    padding-left: 0;
    margin-left: -1px;
}
.tabs a.active {
    background: var(--ribbon);
    color: #3f7d20;
}
.tab-tools {
    display: flex;
    align-items: center;
    gap: 11px;
    margin-left: auto;
}
.tab-tools svg {
    width: 13px;
    height: 12px;
}
.tab-tools .small svg {
    width: 8px;
    height: 5px;
}
.tab-tools button {
    font-weight: bold;
}

/* Ribbon */
.ribbon {
    display: flex;
    height: 113px;
    padding-top: 3px;
    background: var(--ribbon);
    border-bottom: 1px solid #b5bcc0;
}
.group {
    position: relative;
    display: flex;
    flex-direction: column;
    flex: none;
    border-right: 1px solid #a9adb0;
}
.investigate {
    width: 147px;
}
.intent {
    width: 235px;
}
.utilities {
    width: 195px;
}
.ar {
    width: 123px;
}
.toolkit {
    width: 73px;
}
.tools {
    display: flex;
    flex: 1;
}
.stack {
    display: flex;
    flex-direction: column;
    gap: 11px;
    padding-top: 3px;
}
.stack button {
    display: flex;
    align-items: center;
    gap: 4px;
    height: 17px;
}
.stack b {
    width: 16px;
    font-size: 13px;
}
.stack .caret {
    margin-left: 3px;
}
.big {
    display: flex;
    flex-direction: column;
    align-items: center;
    gap: 9px;
    width: 56px;
    height: 84px;
    padding-top: 3px;
}
.big > svg:first-child {
    width: 32px;
    height: 32px;
}
.big .caret {
    margin-top: -4px;
}
.big.narrow {
    width: 38px;
}
.investigate .big {
    width: 44px;
    margin-left: 3px;
}
.investigate .big.cut {
    width: 12px;
    margin-left: -4px;
    padding-top: 44px;
}
.investigate .stack {
    padding-left: 2px;
}
.intent .tools {
    padding-left: 2px;
}
.intent .narrow {
    margin-left: 2px;
}
.intent .stack {
    padding-left: 4px;
}
.utilities .tools {
    gap: 8px;
    padding-left: 7px;
}
.ar .tools {
    gap: 5px;
    padding-left: 4px;
}
.toolkit .tools {
    padding-left: 7px;
}
.group-title {
    display: flex;
    align-items: center;
    justify-content: center;
    gap: 4px;
    height: 25px;
}
.group-title.open {
    background: var(--bar);
}
.bird {
    align-self: flex-start;
    margin: 5px 52px 0 auto;
}
.bird svg {
    width: 80px;
    height: 80px;
}

/* Drop-down menu and its tooltip */
.menu {
    position: absolute;
    z-index: 2;
    top: 110px;
    left: 0;
    width: 234px;
    border: 1px solid #9ed0e0;
    background: linear-gradient(90deg, #f8f9fb 27px, #ddd 27px, #ddd 28px, #fff 28px);
}
.menu button {
    display: flex;
    align-items: center;
    width: 100%;
    height: 23px;
    padding-left: 34px;
}
.menu .selected {
    background: #d3f1fd;
}
.menu svg {
    margin: 0 12px 0 -28px;
}
.callout {
    position: absolute;
    z-index: 3;
    top: 93px;
    left: -1px;
    width: 90px;
    height: 39px;
    border: 3px solid var(--mark);
}
.tooltip {
    position: absolute;
    z-index: 4;
    top: 149px;
    left: 112px;
    width: 278px;
    padding: 12px 20px 13px 14px;
    border: 1px solid #9ed0e0;
    background: #fff;
    color: #222;
}
.tooltip h2 {
    margin: 0 0 7px;
    font-size: 12px;
}
.tooltip p {
    margin: 0;
}

/* Navigator */
.workspace {
    display: flex;
    flex: 1;
}
.navigator {
    display: flex;
    flex-direction: column;
    flex: none;
    width: 91px;
    border-right: 3px solid var(--bar);
    background: var(--ribbon);
}
.nav-tab {
    display: flex;
    align-items: center;
    gap: 7px;
    height: 30px;
    padding-left: 7px;
    background: var(--bar);
}
.nav-tools {
    display: flex;
    align-items: center;
    gap: 10px;
    height: 28px;
    margin-left: -4px;
}
.nav-tools button svg {
    height: 20px;
}
.nav-tools .tree svg {
    width: 20px;
    margin-left: 2px;
}
.nav-filter {
    display: flex;
    align-items: center;
    height: 28px;
}
.nav-filter input {
    width: 40px;
    height: 28px;
    margin-right: -16px;
    border: 1px solid #aaa;
    border-left: 0;
    background: #fff;
}
.nav-filter .clear svg {
    width: 10px;
    height: 10px;
}
.nav-filter .caret {
    margin: 0 12px;
}
.nav-filter .add svg {
    width: 11px;
    height: 11px;
}
.nav-header {
    height: 22px;
    margin: 7px 8px 0 0;
    border-right: 1px solid #ccc;
    border-bottom: 1px solid #ccc;
}
.nav-tree {
    display: flex;
    justify-content: space-between;
    flex: 1;
    padding-right: 5px;
}
.part {
    margin: 3px 0 0 -6px;
    color: #6a4a7c;
}
.scrollbar {
    display: flex;
    flex-direction: column;
    width: 15px;
    border: 1px solid #c4c6c8;
    background: #dedfe1;
}
.scrollbar button {
    height: 15px;
    padding: 5px 2px;
    background: #fafafa;
}
.scrollbar button svg {
    width: 8px;
    height: 5px;
}
.thumb {
    flex: 0 1 88%;
    border: 1px solid #aaa;
    border-width: 1px 0;
    background: #fafafa;
}

/* Model view */
.viewport {
    position: relative;
    flex: 1;
    overflow: hidden;
    background: linear-gradient(#55a8c9, #7fb0be 45%, #a5b4b0 80%, #b9b5a6);
}
.view-tools {
    display: flex;
    justify-content: space-around;
    align-items: center;
    width: 556px;
    height: 30px;
    margin: 8px auto 0;
    padding-right: 4px;
    border: 1px solid #a9c3cc;
    background: var(--ribbon);
}
.view-tools button {
    position: relative;
    display: flex;
    align-items: center;
    justify-content: center;
    width: 23px;
    height: 23px;
}
.view-tools .pressed {
    border: 1px solid #999;
    background: #dcdee0;
}
.more::after {
    content: "";
    position: absolute;
    right: 0;
    bottom: 0;
    border: 2px solid transparent;
    border-right-color: #555;
    border-bottom-color: #555;
}
.gear {
    position: absolute;
    top: 50%;
    left: 50%;
    width: 240px;
    height: 280px;
    margin: -58px 0 0 -97px;
    stroke-linejoin: round;
}
.gear path,
.gear ellipse {
    stroke: #2a2a2a;
    stroke-width: 3;
}
.gear .flank {
    fill: url(#flank);
}
.gear .shade {
    fill: #8c8c8c;
}
.gear .land {
    fill: #bababa;
    stroke-width: 2;
}
.gear .groove {
    fill: none;
    stroke-width: 2;
}
.gear .tip-light {
    fill: #fff;
}
.gear .tip-dark {
    fill: #cbcbcb;
}
.gear .ring {
    fill: url(#ring);
}
.gear .bore {
    fill: #edf2f4;
}

/* Menu manager */
.menu-manager {
    position: absolute;
    top: 0;
    right: 0;
    width: 174px;
    overflow: hidden;
    border: 2px solid #fff;
    border-top-width: 1px;
    outline: 1px solid #b8c4c8;
    background: #fff;
}
.menu-manager h2,
.menu-manager h3 {
    margin: 0;
    font-size: 12px;
    font-weight: normal;
}
.menu-manager h2 {
    background: #e6e8ea;
    color: #999;
    line-height: 31px;
    text-align: center;
}
.menu-manager h3 {
    display: flex;
    align-items: center;
    gap: 9px;
    height: 21px;
    padding-left: 4px;
    background: #c4c6c8;
    color: #222;
}
.menu-manager h3 svg {
    width: 12px;
    height: 7px;
}
.menu-manager button {
    display: block;
    position: relative;
    width: 100%;
    height: 23px;
    padding-left: 22px;
}
.menu-manager button:disabled {
    color: #aaa;
}
.menu-manager .marked::after {
    content: "";
    position: absolute;
    top: 0;
    right: 1px;
    bottom: -3px;
    left: 0;
    border: 3px solid var(--mark);
}
.menu-manager .default {
    font-weight: bold;
}

.mode {
    position: absolute;
    bottom: 0;
    left: 12px;
    margin: 0;
    color: #fff;
    font-size: 10px;
    font-weight: bold;
}
.watermark {
    position: absolute;
    right: 1px;
    bottom: 5px;
    display: flex;
    width: 206px;
    height: 62px;
    background: rgba(225, 230, 225, 0.6);
}
.watermark svg {
    width: 60px;
    height: 60px;
}
.watermark div {
    display: flex;
    flex-direction: column;
    align-items: center;
    margin-left: -2px;
}
.watermark strong {
    color: #5fae74;
    font-size: 29px;
    line-height: 38px;
}
.watermark span {
    color: #a9bdb8;
    font-size: 15px;
    line-height: 20px;
}
```

FILE: gear.js
```
// Each tooth: front tip x, y, back tip x, y, going clockwise from the left
const teeth = [
    [55, 332, 95, 262], [75, 282, 120, 205], [102, 236, 155, 165], [135, 202, 210, 117],
    [178, 176, 262, 80], [228, 158, 320, 57], [268, 152, 380, 50], [308, 160, 445, 60],
    [347, 178, 508, 85], [382, 205, 560, 122], [412, 238, 605, 175], [438, 282, 640, 235],
    [458, 330, 661, 303], [470, 388, 673, 385], [468, 438, 670, 460], [457, 485, 655, 543],
    [438, 530, 628, 612], [412, 585, 588, 672], [380, 618, 545, 722], [342, 645, 485, 760],
    [296, 664, 420, 780], [250, 669, 355, 787], [207, 662, 295, 780], [162, 645, 235, 755],
    [125, 618, 185, 717], [92, 582, 138, 668], [66, 540, 104, 600], [50, 490, 80, 540],
    [40, 435, 70, 450], [42, 382, 72, 360]
];
const n = teeth.length;
const gear = document.getElementById('gear');
const front = { x: 265, y: 411, rx: 186, ry: 226 };
const back = { x: 375, y: 418 };

const mix = (p, q, t) => [p[0] + (q[0] - p[0]) * t, p[1] + (q[1] - p[1]) * t];

const path = (cls, points, closed = true) =>
    `<path class="${cls}" d="M${points.map(p => p.map(Math.round).join(' ')).join('L')}${closed ? 'Z' : ''}"/>`;

// bottom of the gap between tooth i and the next one
function root(i) {
    const a = teeth[(i + n) % n];
    const b = teeth[(i + 1 + n) % n];
    const angle = Math.atan2(((a[1] + b[1]) / 2 - front.y) / front.ry, ((a[0] + b[0]) / 2 - front.x) / front.rx);
    const mid = [(a[2] + b[2]) / 2, (a[3] + b[3]) / 2];
    return {
        f: [front.x + front.rx * Math.cos(angle), front.y + front.ry * Math.sin(angle)],
        b: mix([back.x, back.y], mid, 0.92)
    };
}

let out = '';
// paint from the left side round to the right, top and bottom alike
const order = teeth.map((t, i) => i).sort((a, b) => teeth[a][2] - teeth[b][2]);
for (const i of order) {
    const tip = [teeth[i][0], teeth[i][1]];
    const end = [teeth[i][2], teeth[i][3]];
    const prev = root(i - 1);
    const next = root(i);
    const center = [back.x, back.y];
    const endA = mix(center, mix(end, prev.b, 0.2), 1.02);
    const endB = mix(center, mix(end, next.b, 0.2), 1.02);
    const tipA = mix(tip, prev.f, 0.15);
    const tipB = mix(tip, next.f, 0.15);
    out += path('shade', [prev.f, tipA, endA, mix(endA, prev.b, 0.6), prev.b]);
    out += path('flank', [tipB, next.f, next.b, mix(endB, next.b, 0.4), endB]);
    out += path('land', [tipA, tipB, endB, end, endA]);
    out += path('groove', [mix(tipB, next.f, 0.8), mix(endB, next.b, 0.8)], false);
}
for (let i = 0; i < n; i++) {
    const tip = [teeth[i][0], teeth[i][1]];
    const left = root(i - 1).f;
    const right = root(i).f;
    const a = mix(left, right, 0.1);
    const b = mix(right, left, 0.1);
    const peak = mix(mix(a, b, 0.5), tip, 1.3);
    const tone = tip[0] > 320 || tip[1] < 230 ? 'tip-dark' : 'tip-light';
    const c1 = mix(peak, a, 0.12);
    const c2 = mix(peak, b, 0.12);
    out += `<path class="${tone}" d="M${a.join(' ')}C${c1.join(' ')} ${c2.join(' ')} ${b.join(' ')}Z"/>`;
}
out += '<ellipse class="ring" cx="265" cy="411" rx="188" ry="228"/>';
out += '<ellipse class="bore" cx="276" cy="413" rx="158" ry="191"/>';
gear.innerHTML = out;
```
